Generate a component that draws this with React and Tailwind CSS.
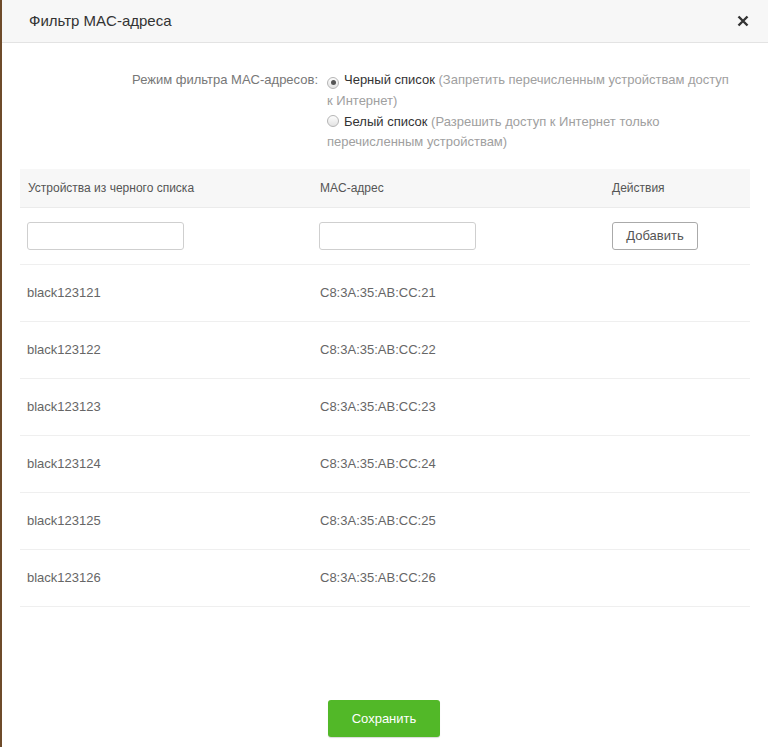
import React from "react";

const rows = [
  ["black123121", "C8:3A:35:AB:CC:21"],
  ["black123122", "C8:3A:35:AB:CC:22"],
  ["black123123", "C8:3A:35:AB:CC:23"],
  ["black123124", "C8:3A:35:AB:CC:24"],
  ["black123125", "C8:3A:35:AB:CC:25"],
  ["black123126", "C8:3A:35:AB:CC:26"],
];

function Radio({ checked }) {
  return (
    <span className="inline-flex w-[12px] h-[12px] rounded-full border border-[#b5b5b5] bg-gradient-to-b from-[#fdfdfd] to-[#e3e3e3] items-center justify-center mr-[5px] align-[-1px]">
      {checked && <span className="w-[5px] h-[5px] rounded-full bg-[#555]" />}
    </span>
  );
}

export default function App() {
  return (
    <div
      className="w-[768px] h-[747px] bg-white border-l-2 border-[#6e4b2a] flex flex-col overflow-hidden"
      style={{ fontFamily: '"Liberation Sans", Arial, sans-serif' }}
    >
      <div className="h-[43px] shrink-0 bg-[#f7f7f7] border-b border-[#e3e3e3] flex items-center justify-between pl-[27px] pr-[19px]">
        <span className="text-[15px] text-[#333]">Фильтр MAC-адреса</span>
        <svg width="12" height="12" viewBox="0 0 12 12">
          <path d="M1.5 1.5 L10.5 10.5 M10.5 1.5 L1.5 10.5" stroke="#333" strokeWidth="2.4" />
        </svg>
      </div>

      <div className="flex pt-[26px] text-[13px] leading-[21px]">
        <div className="w-[325px] shrink-0 text-right text-[#777] pr-[9px]">Режим фильтра MAC-адресов:</div>
        <div className="w-[405px]">
          <div className="text-[#333]">
            <Radio checked />
            Черный список <span className="text-[#a0a0a0]">(Запретить перечисленным устройствам доступ к Интернет)</span>
          </div>
          <div className="text-[#333] mt-[1px] leading-[20px]">
            <Radio />
            Белый список <span className="text-[#a0a0a0]">(Разрешить доступ к Интернет только перечисленным устройствам)</span>
          </div>
        </div>
      </div>

      <div className="mx-[18px] mt-[17px] w-[730px]">
        <div className="grid grid-cols-[292px_292px_146px] h-[39px] bg-[#f7f7f7] border-b border-[#ebebeb] items-center text-[12px] text-[#555]">
          <div className="pl-[8px]">Устройства из черного списка</div>
          <div className="pl-[8px]">MAC-адрес</div>
          <div className="pl-[8px]">Действия</div>
        </div>
        <div className="grid grid-cols-[292px_292px_146px] h-[57px] border-b border-[#efefef] items-center">
          <div className="pl-[7px]">
            <input className="w-[157px] h-[28px] border border-[#cfcfcf] rounded-[3px] outline-none" />
          </div>
          <div className="pl-[7px]">
            <input className="w-[157px] h-[28px] border border-[#cfcfcf] rounded-[3px] outline-none" />
          </div>
          <div className="pl-[8px]">
            <button className="w-[86px] h-[28px] border border-[#aaa] rounded-[3px] bg-white text-[13px] text-[#555]">
              Добавить
            </button>
          </div>
        </div>
        {rows.map(([n, m]) => (
          <div
            key={n}
            className="grid grid-cols-[292px_292px_146px] h-[57px] border-b border-[#efefef] items-center text-[13px] text-[#666]"
          >
            <div className="pl-[7px]">{n}</div>
            <div className="pl-[8px]">{m}</div>
            <div />
          </div>
        ))}
      </div>

      <div className="flex justify-center mt-[93px]">
        <button className="w-[112px] h-[37px] bg-[#52b828] rounded-[3px] text-white text-[13px] shadow-[0_1px_1px_rgba(0,0,0,0.15)] ml-[-2px]">
          Сохранить
        </button>
      </div>
    </div>
  );
}
